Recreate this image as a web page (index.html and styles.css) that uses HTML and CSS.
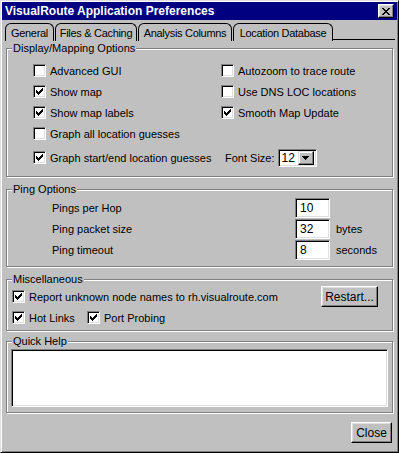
FILE: index.html
```html
<!DOCTYPE html>
<html lang="en">
<head>
    <meta charset="UTF-8">
    <title>VisualRoute Application Preferences</title>
    <link rel="stylesheet" href="styles.css">
</head>
<body>
    <div class="window">
        <!-- Title bar -->
        <div class="titlebar">
            <span class="title">VisualRoute Application Preferences</span>
            <span class="close-btn">
                <svg width="8" height="7" viewBox="0 0 8 7" shape-rendering="crispEdges"><path d="M0 0h2v1h-2z M6 0h2v1h-2z M1 1h2v1h-2z M5 1h2v1h-2z M2 2h4v1h-4z M3 3h2v1h-2z M2 4h4v1h-4z M1 5h2v1h-2z M5 5h2v1h-2z M0 6h2v1h-2z M6 6h2v1h-2z" fill="#000"/></svg>
            </span>
        </div>

        <!-- Tabs -->
        <div class="tabs">
            <div class="tab tab-general">General</div>
            <div class="tab tab-files">Files &amp; Caching</div>
            <div class="tab tab-columns">Analysis Columns</div>
            <div class="tab tab-location">Location Database</div>
            <div class="tab-fill"></div>
        </div>

        <div class="panel">
            <!-- Display / mapping -->
            <fieldset class="group">
                <legend>Display/Mapping Options</legend>
                <div class="group-body display-body">
                    <div class="opt-row">
                        <label class="check opt-col"><span class="box"></span>Advanced GUI</label>
                        <label class="check"><span class="box"></span>Autozoom to trace route</label>
                    </div>
                    <div class="opt-row">
                        <label class="check opt-col"><span class="box"><svg width="7" height="7" viewBox="0 0 7 7" shape-rendering="crispEdges"><path d="M6 0h1v1h-1z M5 1h2v1h-2z M0 2h1v1h-1z M4 2h3v1h-3z M0 3h2v1h-2z M3 3h3v1h-3z M0 4h5v1h-5z M1 5h3v1h-3z M2 6h1v1h-1z"/></svg></span>Show map</label>
                        <label class="check"><span class="box"></span>Use DNS LOC locations</label>
                    </div>
                    <div class="opt-row">
                        <label class="check opt-col"><span class="box"><svg width="7" height="7" viewBox="0 0 7 7" shape-rendering="crispEdges"><path d="M6 0h1v1h-1z M5 1h2v1h-2z M0 2h1v1h-1z M4 2h3v1h-3z M0 3h2v1h-2z M3 3h3v1h-3z M0 4h5v1h-5z M1 5h3v1h-3z M2 6h1v1h-1z"/></svg></span>Show map labels</label>
                        <label class="check"><span class="box"><svg width="7" height="7" viewBox="0 0 7 7" shape-rendering="crispEdges"><path d="M6 0h1v1h-1z M5 1h2v1h-2z M0 2h1v1h-1z M4 2h3v1h-3z M0 3h2v1h-2z M3 3h3v1h-3z M0 4h5v1h-5z M1 5h3v1h-3z M2 6h1v1h-1z"/></svg></span>Smooth Map Update</label>
                    </div>
                    <div class="opt-row">
                        <label class="check opt-col"><span class="box"></span>Graph all location guesses</label>
                    </div>
                    <div class="opt-row spaced">
                        <label class="check opt-col"><span class="box"><svg width="7" height="7" viewBox="0 0 7 7" shape-rendering="crispEdges"><path d="M6 0h1v1h-1z M5 1h2v1h-2z M0 2h1v1h-1z M4 2h3v1h-3z M0 3h2v1h-2z M3 3h3v1h-3z M0 4h5v1h-5z M1 5h3v1h-3z M2 6h1v1h-1z"/></svg></span>Graph start/end location guesses</label>
                        <div class="font-size">
                            <span>Font Size:</span>
                            <div class="select">
                                <span class="select-value">12</span>
                                <span class="drop"><svg width="7" height="4" viewBox="0 0 7 4" shape-rendering="crispEdges"><path d="M0 0h7v1h-7z M1 1h5v1h-5z M2 2h3v1h-3z M3 3h1v1h-1z"/></svg></span>
                            </div>
                        </div>
                    </div>
                </div>
            </fieldset>

            <!-- Ping -->
            <fieldset class="group group-gap">
                <legend>Ping Options</legend>
                <div class="group-body ping-body">
                    <div class="ping-row">
                        <span class="ping-label">Pings per Hop</span>
                        <span class="field">10</span>
                    </div>
                    <div class="ping-row">
                        <span class="ping-label">Ping packet size</span>
                        <span class="field">32</span>
                        <span class="unit">bytes</span>
                    </div>
                    <div class="ping-row">
                        <span class="ping-label">Ping timeout</span>
                        <span class="field">8</span>
                        <span class="unit">seconds</span>
                    </div>
                </div>
            </fieldset>

            <!-- Misc -->
            <fieldset class="group group-gap">
                <legend>Miscellaneous</legend>
                <div class="group-body misc-body">
                    <div class="misc-row">
                        <label class="check"><span class="box"><svg width="7" height="7" viewBox="0 0 7 7" shape-rendering="crispEdges"><path d="M6 0h1v1h-1z M5 1h2v1h-2z M0 2h1v1h-1z M4 2h3v1h-3z M0 3h2v1h-2z M3 3h3v1h-3z M0 4h5v1h-5z M1 5h3v1h-3z M2 6h1v1h-1z"/></svg></span>Report unknown node names to rh.visualroute.com</label>
                        <button class="btn btn-restart">Restart...</button>
                    </div>
                    <div class="misc-row">
                        <label class="check hot-links"><span class="box"><svg width="7" height="7" viewBox="0 0 7 7" shape-rendering="crispEdges"><path d="M6 0h1v1h-1z M5 1h2v1h-2z M0 2h1v1h-1z M4 2h3v1h-3z M0 3h2v1h-2z M3 3h3v1h-3z M0 4h5v1h-5z M1 5h3v1h-3z M2 6h1v1h-1z"/></svg></span>Hot Links</label>
                        <label class="check"><span class="box"><svg width="7" height="7" viewBox="0 0 7 7" shape-rendering="crispEdges"><path d="M6 0h1v1h-1z M5 1h2v1h-2z M0 2h1v1h-1z M4 2h3v1h-3z M0 3h2v1h-2z M3 3h3v1h-3z M0 4h5v1h-5z M1 5h3v1h-3z M2 6h1v1h-1z"/></svg></span>Port Probing</label>
                    </div>
                </div>
            </fieldset>

            <!-- Help -->
            <fieldset class="group group-help">
                <legend>Quick Help</legend>
                <div class="group-body help-body">
                    <div class="help-box"></div>
                </div>
            </fieldset>

            <div class="footer">
                <button class="btn btn-close">Close</button>
            </div>
        </div>
    </div>
</body>
</html>
```

FILE: styles.css
```css
body {
    margin: 0;
    font-family: "Liberation Sans", Arial, sans-serif;
    font-size: 11px;
    color: #000;
    background: #c0c0c0;
}

.window {
    width: 399px;
    height: 453px;
    box-sizing: border-box;
    border: 1px solid;
    border-color: #dfdfdf #000 #000 #dfdfdf;
    box-shadow: inset 1px 1px #fff, inset -1px -1px #808080;
    padding: 1px;
    background: #c0c0c0;
    display: flex;
    flex-direction: column;
}

/* title bar */
.titlebar {
    height: 18px;
    background: #000080;
    color: #fff;
    display: flex;
    align-items: center;
    justify-content: space-between;
    padding: 0 3px 0 3px;
}

.title {
    font-weight: bold;
    font-size: 12px;
}

.close-btn {
    width: 16px;
    height: 14px;
    box-sizing: border-box;
    background: #c0c0c0;
    border: 1px solid;
    border-color: #fff #000 #000 #fff;
    box-shadow: inset -1px -1px #808080, inset 1px 1px #dfdfdf;
    display: flex;
    align-items: center;
    justify-content: center;
}

.close-btn svg {
    display: block;
}

/* tabs */
.tabs {
    display: flex;
    height: 18px;
    margin: 3px 2px 0 3px;
}

.tab {
    flex: none;
    box-sizing: border-box;
    height: 18px;
    border: 1px solid #000;
    border-bottom: none;
    border-radius: 6px 6px 0 0;
    margin-right: 1px;
    display: flex;
    align-items: center;
    justify-content: center;
    white-space: nowrap;
    letter-spacing: -0.3px;
}

.tab-general { width: 49px; }
.tab-files { width: 82px; }
.tab-columns { width: 94px; }
.tab-location { width: 100px; margin-right: 0; }

.tab-fill {
    flex: 1;
    border-bottom: 1px solid #000;
    margin-bottom: 1px;
}

/* panel and group boxes */
.panel {
    flex: 1;
    padding: 1px 4px 0;
    display: flex;
    flex-direction: column;
}

.group {
    margin: 0;
    padding: 0;
    min-width: 0;
    border: 1px solid #808080;
    box-shadow: inset 1px 1px #fff, 1px 1px #fff;
}

.group legend {
    margin-left: 5px;
    padding: 0 1px;
    line-height: 13px;
    background: #c0c0c0;
}

.group-gap {
    margin-top: 6px;
}

.group-help {
    margin-top: 4px;
}

.display-body {
    padding: 5px 0 8px 26px;
}

.ping-body {
    padding: 2px 0 5px 45px;
}

.misc-body {
    padding: 0 14px 2px 5px;
}

.help-body {
    padding: 1px 4px 5px;
}

/* checkboxes */
.opt-row {
    display: flex;
    align-items: center;
    height: 21px;
}

.opt-row.spaced {
    margin-top: 3px;
}

.opt-col {
    width: 188px;
}

.check {
    display: flex;
    align-items: center;
    gap: 4px;
    white-space: nowrap;
}

.box {
    flex: none;
    width: 13px;
    height: 13px;
    box-sizing: border-box;
    background: #fff;
    border: 1px solid;
    border-color: #808080 #fff #fff #808080;
    box-shadow: inset 1px 1px #000, inset -1px -1px #dfdfdf;
}

.box svg {
    display: block;
    margin: 2px;
}

/* font size select */
.font-size {
    display: flex;
    align-items: center;
    gap: 3px;
    padding-left: 4px;
}

.select {
    width: 39px;
    height: 18px;
    box-sizing: border-box;
    background: #fff;
    border: 1px solid;
    border-color: #808080 #fff #fff #808080;
    box-shadow: inset 1px 1px #000, inset -1px -1px #dfdfdf;
    display: flex;
    align-items: center;
    padding: 2px;
}

.select-value {
    flex: 1;
    padding-left: 1px;
    font-size: 12px;
}

.drop {
    width: 16px;
    height: 14px;
    box-sizing: border-box;
    background: #c0c0c0;
    border: 1px solid;
    border-color: #dfdfdf #000 #000 #dfdfdf;
    box-shadow: inset -1px -1px #808080, inset 1px 1px #fff;
    display: flex;
    align-items: center;
    justify-content: center;
}

.drop svg {
    display: block;
}

/* ping fields */
.ping-row {
    display: flex;
    height: 21px;
}

.ping-label {
    width: 243px;
    line-height: 20px;
}

.field {
    width: 35px;
    height: 20px;
    box-sizing: border-box;
    background: #fff;
    border: 1px solid;
    border-color: #808080 #fff #fff #808080;
    box-shadow: inset 1px 1px #000, inset -1px -1px #dfdfdf;
    padding-left: 4px;
    line-height: 18px;
    font-size: 12px;
}

.unit {
    margin-left: 6px;
    line-height: 20px;
}

/* misc */
.misc-row {
    display: flex;
    align-items: center;
    height: 21px;
}

.misc-row .btn-restart {
    margin-left: auto;
}

.hot-links {
    width: 75px;
}

.btn {
    box-sizing: border-box;
    height: 21px;
    padding: 0;
    background: #c0c0c0;
    border: 1px solid;
    border-color: #fff #000 #000 #fff;
    box-shadow: inset -1px -1px #808080, inset 1px 1px #dfdfdf;
    font-family: inherit;
    font-size: 12px;
    color: #000;
}

.btn-restart {
    width: 57px;
}

.btn-close {
    width: 41px;
}

.help-box {
    height: 58px;
    box-sizing: border-box;
    background: #fff;
    border: 1px solid;
    border-color: #808080 #fff #fff #808080;
    box-shadow: inset 1px 1px #000, inset -1px -1px #dfdfdf;
}

.footer {
    display: flex;
    justify-content: flex-end;
    margin-top: 9px;
    padding-right: 1px;
}
```
